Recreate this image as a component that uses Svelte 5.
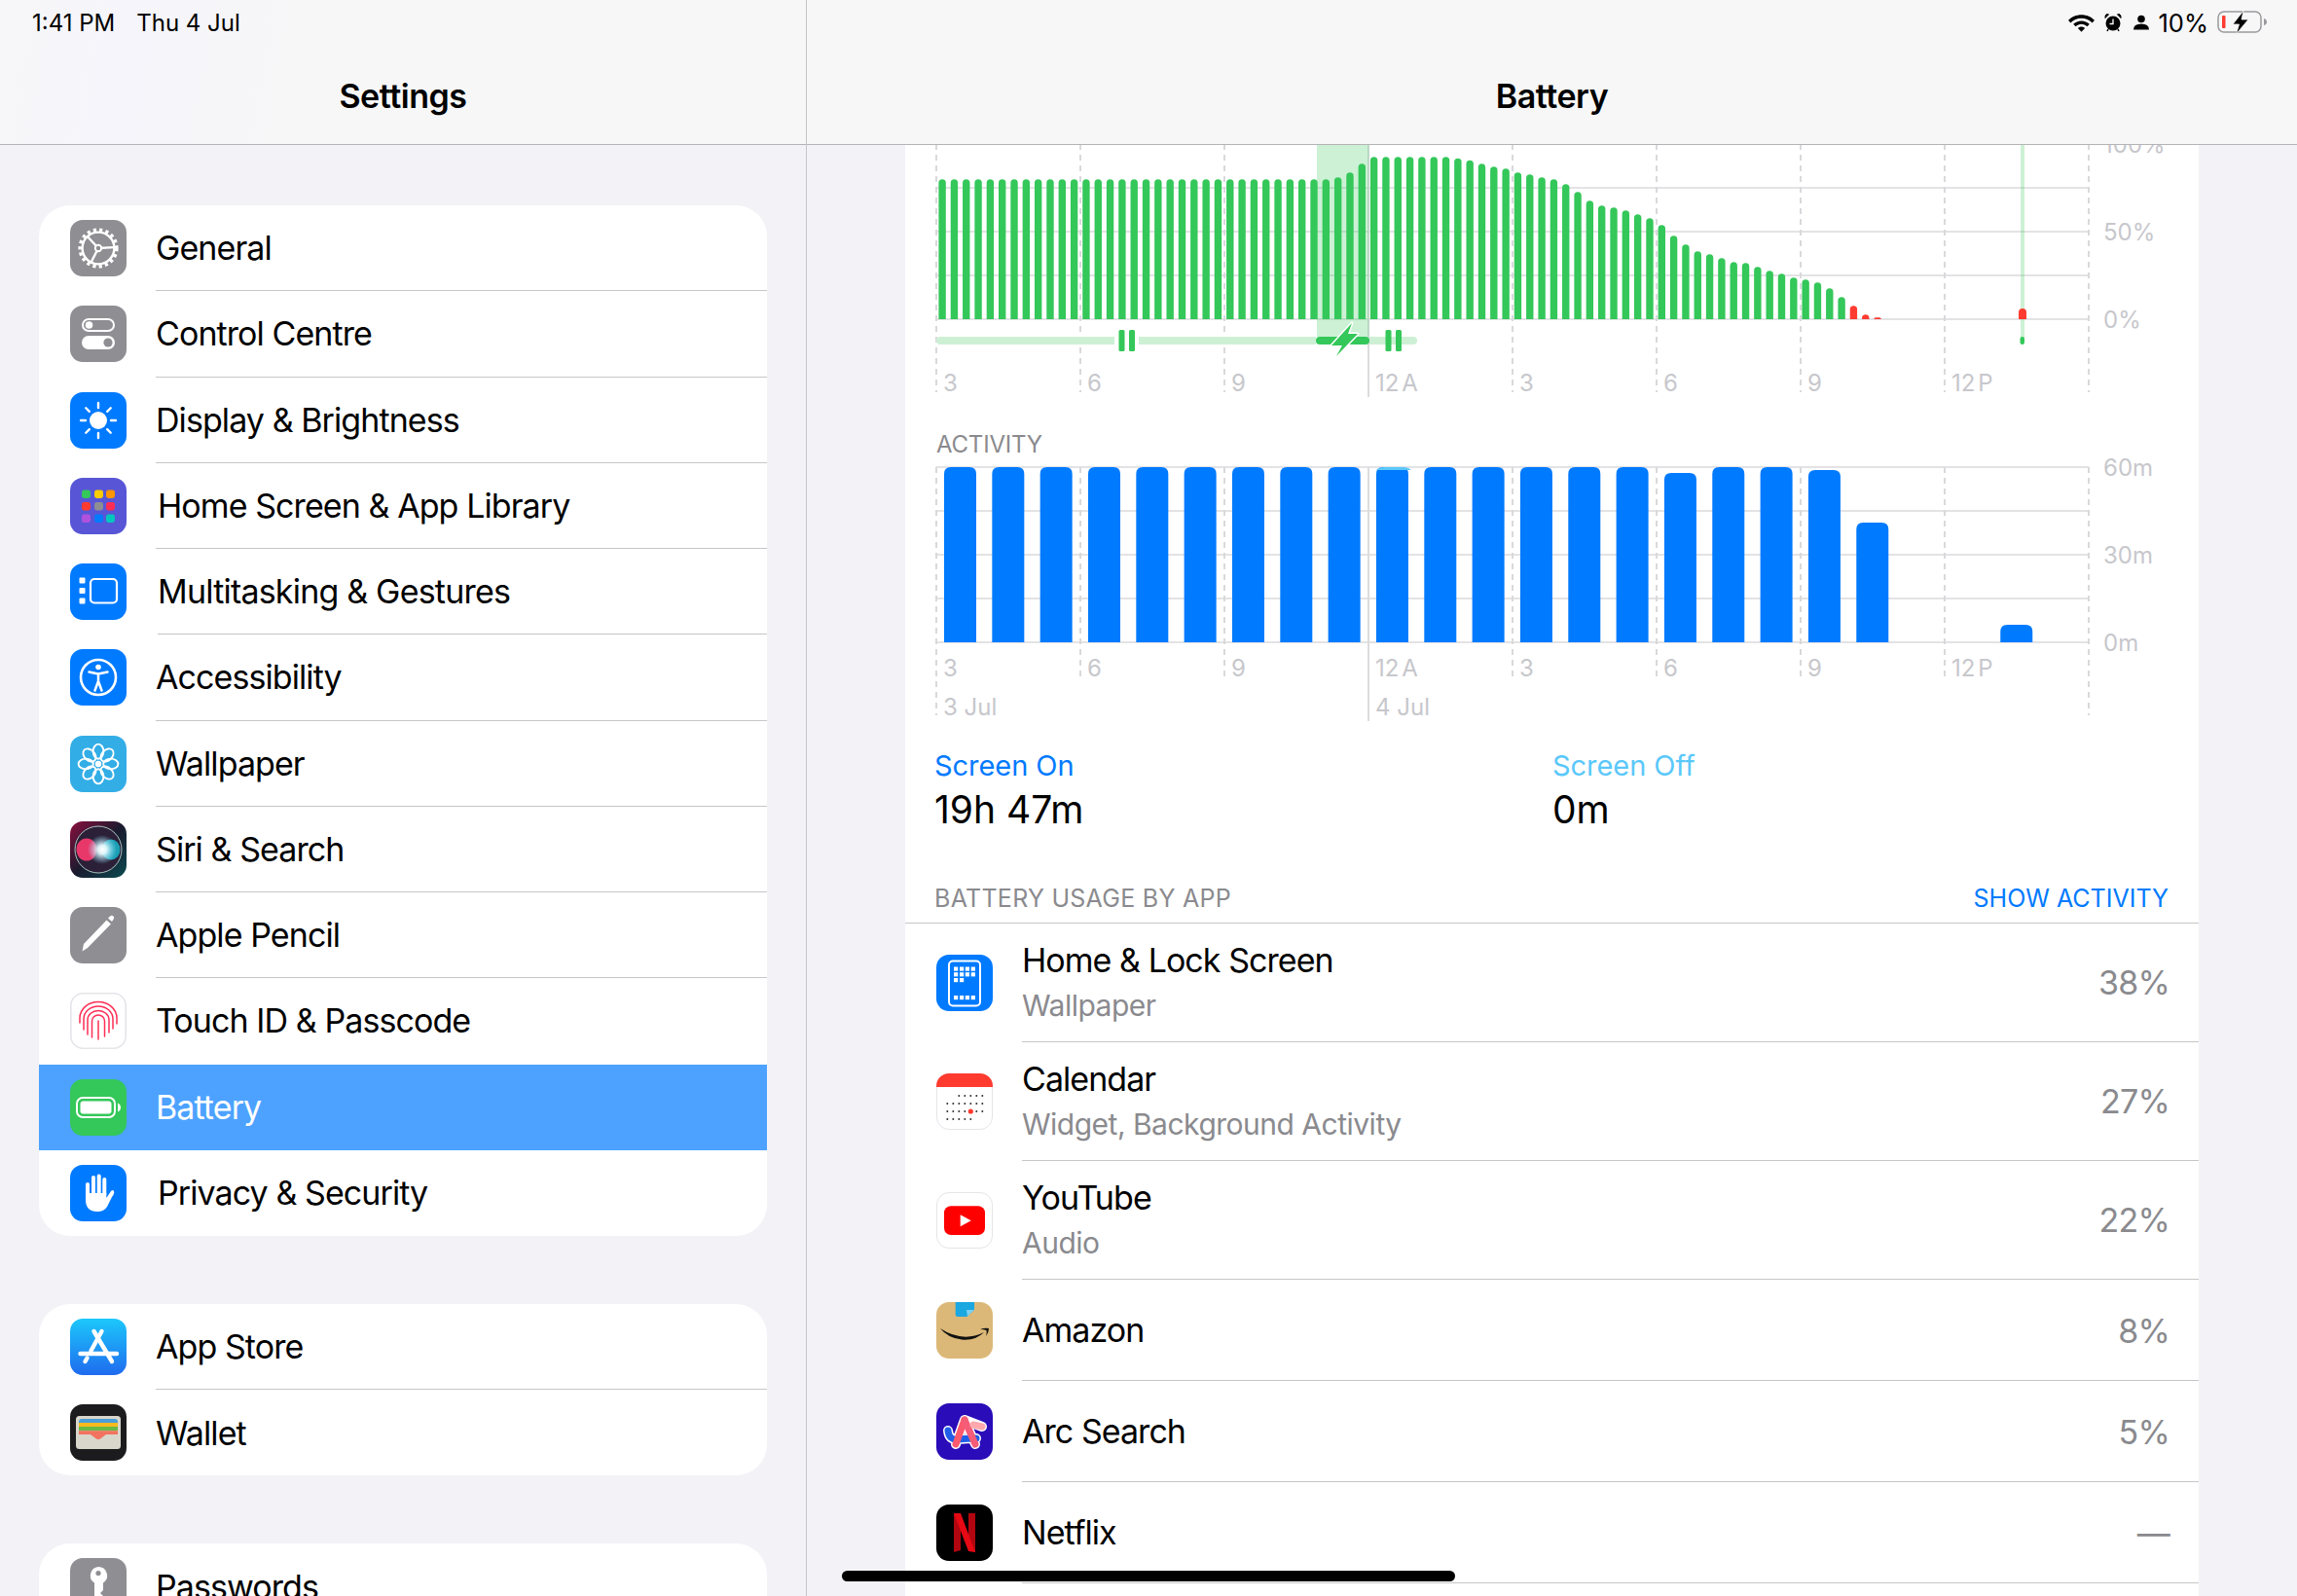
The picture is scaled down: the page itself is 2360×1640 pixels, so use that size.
<script>
  const group1 = [
    ['gear','General'],['toggles','Control Centre'],['sun','Display & Brightness'],['grid','Home Screen & App Library'],
    ['multi','Multitasking & Gestures'],['access','Accessibility'],['flower','Wallpaper'],['siri','Siri & Search'],
    ['pencil','Apple Pencil'],['touch','Touch ID & Passcode'],['battery','Battery'],['hand','Privacy & Security']
  ];
  const group2 = [['appstore','App Store'],['wallet','Wallet']];
  const group3 = [['key','Passwords']];
  const apps = [
    {i:'homelock',t:'Home & Lock Screen',s:'Wallpaper',p:'38%'},
    {i:'calendar',t:'Calendar',s:'Widget, Background Activity',p:'27%'},
    {i:'youtube',t:'YouTube',s:'Audio',p:'22%'},
    {i:'amazon',t:'Amazon',p:'8%'},
    {i:'arc',t:'Arc Search',p:'5%'},
    {i:'netflix',t:'Netflix',p:'—'},
    {i:'',t:'',p:''}
  ];
  const tops = [...Array(33).fill(163),157,142,115,...Array(7).fill(94),98,104,115,124,130,142,148,157,163,178,202,229,
    244,250,259,271,283,304,337,364,385,394,406,418,421,433,445,454,466,472,481,499,526,553,580,589];
  const barPath = (x,w,top,bottom,r) => {
    const rr = Math.min(r, bottom-top);
    return `M${x} ${bottom}V${top+rr}Q${x} ${top} ${x+rr} ${top}H${x+w-rr}Q${x+w} ${top} ${x+w} ${top+rr}V${bottom}Z`;
  };
  const greens = tops.map((py,i)=>({d:barPath(964.4+12.32*i,7.4,130+py/3,328,3.7),red:i>=76}));
  const blueTops = [...Array(15).fill(480),486,480,480,483,537,null,null,642];
  const blues = blueTops.map((t,i)=> t===null?null:barPath(970+49.33*i,33,t,660,7)).filter(Boolean);
  const gridX = [962,1110,1258,1406,1554,1702,1850,1998,2146];
  const hours = [['3',969],['6',1117],['9',1265],['12 A',1413],['3',1561],['6',1709],['9',1857],['12 P',2005]];
  const petals = [0,45,90,135,180,225,270,315];
  const cal = [[23,[2,3,4,5,6]],[31,[0,1,2,3,4,5,6]],[39,[0,1,2,3,5,6]],[47,[0,1,2,3,4]]];
  const gearSpokes = [[-133],[-3],[117]];
</script>

{#snippet icon(n)}
  <svg class="icon" viewBox="0 0 58 58" width="58" height="58" aria-hidden="true">
    <defs>
      <linearGradient id={'as-'+n} x1="0" y1="0" x2="0" y2="1"><stop offset="0" stop-color="#1cc8fb"/><stop offset="1" stop-color="#1f6bef"/></linearGradient>
      <linearGradient id={'si-'+n} x1="0" y1="0" x2="1" y2="1"><stop offset="0" stop-color="#8a0f3e"/><stop offset=".5" stop-color="#1a1a2e"/><stop offset="1" stop-color="#0b4a50"/></linearGradient>
      <radialGradient id={'sr-'+n}><stop offset="0" stop-color="#fff"/><stop offset=".3" stop-color="#e8fbff" stop-opacity=".95"/><stop offset="1" stop-color="#8fe6ff" stop-opacity="0"/></radialGradient>
    </defs>
    {#if n==='gear'}
      <rect width="58" height="58" rx="13" fill="#8e8e93"/>
      <circle cx="29" cy="29" r="18.6" fill="none" stroke="#fff" stroke-width="4" stroke-dasharray="3.2 3.1"/>
      <circle cx="29" cy="29" r="16.4" fill="none" stroke="#fff" stroke-width="2.4"/>
      {#each gearSpokes as [a]}<line x1="29" y1="29" x2="45" y2="29" stroke="#fff" stroke-width="2.4" transform="rotate({a} 29 29)"/>{/each}
      <circle cx="29" cy="29" r="3.2" fill="#8e8e93" stroke="#fff" stroke-width="2"/>
    {:else if n==='toggles'}
      <rect width="58" height="58" rx="13" fill="#8e8e93"/>
      <rect x="13" y="14" width="32" height="12" rx="6" fill="none" stroke="#fff" stroke-width="2"/>
      <circle cx="19.5" cy="20" r="3.8" fill="#fff"/>
      <rect x="12" y="31" width="34" height="14" rx="7" fill="#fff"/>
      <circle cx="39" cy="38" r="4.6" fill="#8e8e93"/>
    {:else if n==='sun'}
      <rect width="58" height="58" rx="13" fill="#007aff"/>
      <circle cx="29" cy="29" r="9" fill="#fff"/>
      {#each petals as a}<line x1="29" y1="11" x2="29" y2="16" stroke="#fff" stroke-width="2.4" stroke-linecap="round" transform="rotate({a} 29 29)"/>{/each}
    {:else if n==='grid'}
      <rect width="58" height="58" rx="13" fill="#5856d6"/>
      <rect x="12" y="12.5" width="9" height="8.5" rx="2.4" fill="#34c759"/><rect x="25" y="12.5" width="9" height="8.5" rx="2.4" fill="#ffcc00"/><rect x="37" y="12.5" width="9" height="8.5" rx="2.4" fill="#ff9500"/>
      <rect x="12" y="25" width="9" height="8.5" rx="2.4" fill="#ff3b30"/><rect x="25" y="25" width="9" height="8.5" rx="2.4" fill="#8e8e93"/><rect x="37" y="25" width="9" height="8.5" rx="2.4" fill="#ff2d55"/>
      <rect x="12" y="37.5" width="9" height="8.5" rx="2.4" fill="#af52de"/><rect x="25" y="37.5" width="9" height="8.5" rx="2.4" fill="#007aff"/><rect x="37" y="37.5" width="9" height="8.5" rx="2.4" fill="#00c7be"/>
    {:else if n==='multi'}
      <rect width="58" height="58" rx="13" fill="#007aff"/>
      <rect x="9.5" y="14.5" width="6" height="6" rx="1" fill="#fff"/><rect x="9.5" y="25" width="6" height="6" rx="1" fill="#fff"/><rect x="9.5" y="35.5" width="6" height="6" rx="1" fill="#fff"/>
      <rect x="21" y="16" width="27" height="24.5" rx="4" fill="none" stroke="#fff" stroke-width="2.2"/>
    {:else if n==='access'}
      <rect width="58" height="58" rx="13" fill="#007aff"/>
      <circle cx="29" cy="29" r="18" fill="none" stroke="#fff" stroke-width="2.6"/>
      <circle cx="29" cy="18.5" r="2.8" fill="#fff"/>
      <path d="M19.5 23.5 29 25.5 38.5 23.5M29 25.5V33M29 33 25.5 42.5M29 33 32.5 42.5" fill="none" stroke="#fff" stroke-width="2.5" stroke-linecap="round" stroke-linejoin="round"/>
    {:else if n==='flower'}
      <rect width="58" height="58" rx="13" fill="#32ade6"/>
      {#each petals as a}<ellipse cx="29" cy="16.2" rx="5.4" ry="7.6" fill="none" stroke="#fff" stroke-width="1.9" transform="rotate({a} 29 29)"/>{/each}
      <circle cx="29" cy="29" r="3.2" fill="#fff"/>
    {:else if n==='siri'}
      <rect width="58" height="58" rx="13" fill={'url(#si-siri)'}/>
      <circle cx="29" cy="29" r="24" fill="#2b2038" stroke="#a9c2bd" stroke-width="1"/>
      <ellipse cx="17" cy="29" rx="10.5" ry="11.5" fill="#e8386a"/>
      <ellipse cx="42" cy="29" rx="9.5" ry="10.5" fill="#1c9fb5"/>
      <circle cx="33" cy="29" r="15" fill={'url(#sr-siri)'}/>
    {:else if n==='pencil'}
      <rect width="58" height="58" rx="13" fill="#8e8e93"/>
      <path d="M12.5 45.5 14 38 37.5 13.5 42 17.5 18 42Z" fill="#fff"/>
      <path d="M39 11.5 41 9.5Q43 8 44.5 9.5T44 13.5L43 15Z" fill="#fff"/>
    {:else if n==='touch'}
      <rect x=".8" y=".8" width="56.4" height="56.4" rx="12.5" fill="#fff" stroke="#e5e5ea" stroke-width="1.6"/>
      <g fill="none" stroke="#ff2d55" stroke-width="1.5" stroke-linecap="round">
        <path d="M10 31V26A19 16.5 0 0 1 48 26V32"/><path d="M14 38V27A15 13 0 0 1 44 27V37"/><path d="M18 43V28A11 9.5 0 0 1 40 28V41"/><path d="M22.5 46V29A6.5 6 0 0 1 35.5 29V45"/><path d="M29 48V29"/>
      </g>
    {:else if n==='battery'}
      <rect width="58" height="58" rx="13" fill="#34c759"/>
      <rect x="7" y="19" width="39" height="20" rx="6" fill="none" stroke="#fff" stroke-width="2"/>
      <rect x="10.5" y="22.5" width="32" height="13" rx="3" fill="#fff"/>
      <path d="M49 24.5Q52 26 52 29T49 33.5Z" fill="#fff"/>
    {:else if n==='hand'}
      <rect width="58" height="58" rx="13" fill="#007aff"/>
      <g stroke="#fff" stroke-width="4" stroke-linecap="round"><line x1="18" y1="31" x2="18" y2="20"/><line x1="24" y1="30" x2="24" y2="13"/><line x1="29.7" y1="30" x2="29.7" y2="11.5"/><line x1="35.3" y1="30" x2="35.3" y2="15"/></g>
      <path d="M16 29H37.3V34L42 27Q44 25 45 27T43 33L38 43Q35 48 28 48 16 48 16 36Z" fill="#fff"/>
    {:else if n==='appstore'}
      <rect width="58" height="58" rx="13" fill={'url(#as-appstore)'}/>
      <g stroke="#fff" stroke-width="4.4" stroke-linecap="round" fill="none"><path d="M24.5 13 43 44"/><path d="M32.5 13 21.500 33"/><path d="M17.500 40.500 15.500 44"/><path d="M10.5 36H48"/></g>
    {:else if n==='wallet'}
      <rect width="58" height="58" rx="13" fill="#1c1c1e"/>
      <rect x="6" y="12" width="46" height="34" rx="3.5" fill="#d9d6cc"/>
      <path d="M9 18Q9 15 12 15H46Q49 15 49 18V19H9Z" fill="#4a9fd8"/>
      <rect x="9" y="19" width="40" height="4" fill="#f9b91d"/><rect x="9" y="23" width="40" height="4.2" fill="#6bb944"/>
      <path d="M9 27.2H49V31H37L31 35.5Q29 36.5 27 35.5L21 31H9Z" fill="#f2735f"/>
    {:else if n==='key'}
      <rect width="58" height="58" rx="13" fill="#8e8e93"/>
      <path d="M29 9a9 9 0 0 1 5 16.5V33l-3 3 3 3-3 3 3 3-5 5-4-4V25.500A9 9 0 0 1 29 9Z" fill="#fff"/>
      <circle cx="29" cy="15.500" r="2.600" fill="#8e8e93"/>
    {:else if n==='homelock'}
      <rect width="58" height="58" rx="13" fill="#007aff"/>
      <rect x="13" y="6.500" width="32" height="46" rx="4" fill="none" stroke="#fff" stroke-width="2"/>
      {#each [12.5,18.2] as y}{#each [18,24,29.8,35.7] as x}<rect {x} {y} width="4.200" height="4.200" fill="#fff"/>{/each}{/each}
      {#each [18,24] as x}<rect {x} y="24" width="4.200" height="4.200" fill="#fff"/>{/each}
      {#each [18,24,29.8,35.7] as x}<rect {x} y="42" width="4.200" height="4.200" fill="#fff"/>{/each}
    {:else if n==='calendar'}
      <rect x=".5" y=".5" width="57" height="57" rx="12.500" fill="#fff" stroke="#e5e5ea"/>
      <path d="M0 14V13A13 13 0 0 1 13 0H45A13 13 0 0 1 58 13V14Z" fill="#ff3b30"/>
      {#each cal as [y,cols]}{#each cols as c}<circle cx={11.3+6*c} cy={y} r="1" fill="#333"/>{/each}{/each}
      <circle cx="35.300" cy="39" r="2.600" fill="#ff3b30"/>
    {:else if n==='youtube'}
      <rect x=".5" y=".5" width="57" height="57" rx="12.500" fill="#fff" stroke="#e5e5ea"/>
      <rect x="8" y="14.300" width="42" height="29.700" rx="7" fill="#f00"/>
      <path d="M24.700 23.300 35.700 29.200 24.700 35.200Z" fill="#fff"/>
    {:else if n==='amazon'}
      <rect width="58" height="58" rx="13" fill="#dcb878"/>
      <path d="M19.700 0H39V8L32 14.500Q31 15 29 15H22Q19.700 15 19.700 13Z" fill="#1ba7e0"/>
      <path d="M31 8 39 8 32 14.500Z" fill="#7fd0ef"/>
      <path d="M4 27Q27 42 49 31 40 40 26 38.500 12 37 4 27Z" fill="#111"/>
      <path d="M45 28Q50 26 54 27 54 31 51 35 52 31 51.500 29 49 28 45 28Z" fill="#111"/>
    {:else if n==='arc'}
      <rect width="58" height="58" rx="13" fill="#2a0cb8"/>
      <g fill="none" stroke-linecap="round" stroke-linejoin="round">
        <path d="M12 28Q13 38 22 37 32 36 41 36M20 42 29 17 40 42M29 17 47 24" stroke="#fff" stroke-width="10"/>
        <path d="M12 28Q13 38 22 37 32 36 41 36" stroke="#1f5fe8" stroke-width="7"/>
        <path d="M20 42 29 17" stroke="#fb5a6e" stroke-width="7"/>
        <path d="M29 17 40 42" stroke="#f45c78" stroke-width="7"/>
        <path d="M38 22 47 24" stroke="#ffa8ad" stroke-width="7"/>
      </g>
    {:else if n==='netflix'}
      <rect width="58" height="58" rx="13" fill="#000"/>
      <path d="M18 9H25V47L18 49Z" fill="#b1060f"/><path d="M33 9H40V49L33 47Z" fill="#b1060f"/>
      <path d="M18 9H25L40 49 33 48Z" fill="#e50914"/>
    {/if}
  </svg>
{/snippet}

{#snippet navRow(item)}
  <div class="nav-row" class:sel={item[1]==='Battery'}>
    {@render icon(item[0])}
    <div class="nav-label">{item[1]}</div>
  </div>
{/snippet}

<div class="screen">
  <aside class="sidebar">
    <header class="bar side-bar">
      <div class="status"><span>1:41 PM</span><span class="date">Thu 4 Jul</span></div>
      <h1>Settings</h1>
    </header>
    <div class="nav">
      <section class="card first">{#each group1 as r}{@render navRow(r)}{/each}</section>
      <section class="card">{#each group2 as r}{@render navRow(r)}{/each}</section>
      <section class="card">{#each group3 as r}{@render navRow(r)}{/each}</section>
    </div>
  </aside>

  <main class="detail">
    <header class="bar">
      <div class="status right">
        <svg class="s-wifi" width="27" height="19" viewBox="1.500 2.500 25 17.500"><path d="M14 3.500C19 3.500 23.500 5.500 26.500 8.800L24.300 11.200C21.700 8.400 18 6.800 14 6.800S6.300 8.400 3.700 11.200L1.500 8.800C4.500 5.500 9 3.500 14 3.500Z" fill="#000"/><path d="M14 9.300C17 9.300 19.700 10.500 21.700 12.500L19.500 14.800C18 13.400 16.100 12.500 14 12.500S10 13.400 8.500 14.800L6.300 12.500C8.300 10.500 11 9.300 14 9.300Z" fill="#000"/><path d="M14 15C15.300 15 16.500 15.500 17.300 16.300L14 19.800 10.700 16.300C11.500 15.500 12.700 15 14 15Z" fill="#000"/></svg>
        <svg class="s-alarm" width="18" height="20" viewBox="0 0 18 20"><circle cx="9" cy="11" r="7.500" fill="#000"/><path d="M9 6.500V11.500H5.500" stroke="#fff" stroke-width="1.300" fill="none"/><path d="M1 5.500 4.500 1.800 2.500 1.500Q.5 2.500 1 5.500ZM17 5.500 13.500 1.800 15.500 1.500Q17.500 2.500 17 5.500Z" fill="#000" stroke="#000"/><path d="M4 17 3 19M14 17 15 19" stroke="#000" stroke-width="1.500"/></svg>
        <svg class="s-person" width="16" height="16" viewBox="0 0 16 16"><circle cx="8" cy="4.500" r="3.800" fill="#000"/><path d="M0 15.500Q0 9.500 8 9.500T16 15.500Z" fill="#000"/></svg>
        <span class="pct">10%</span>
        <svg class="s-batt" width="52" height="24" viewBox="0 0 52 24"><rect x="1" y="1" width="44" height="21" rx="6" fill="none" stroke="#9a9a9e" stroke-width="1.500"/><rect x="5" y="5" width="3.500" height="13" rx="1" fill="#ff3b30"/><path d="M48 8Q51 9 51 11.500T48 15Z" fill="#9a9a9e"/><path d="M27 0 16 14H22.500L19.500 24 32 9H25Z" fill="#000" stroke="#f7f7f7" stroke-width=".8"/></svg>
      </div>
      <h1>Battery</h1>
    </header>

    <div class="scroll">
      <div class="panel">
        <svg class="chart" viewBox="930 149 1329 610" width="1329" height="610" role="img" aria-label="Battery level and activity charts">
          <g stroke="#e3e3e6" stroke-width="2">
            {#each [193,238,283,328] as y}<line x1="962" x2="2146" y1={y} y2={y}/>{/each}
            {#each [480,525,570,615,660] as y}<line x1="962" x2="2146" y1={y} y2={y}/>{/each}
          </g>
          <g stroke="#d9d9dc" stroke-width="2" stroke-dasharray="6 5">
            {#each gridX as x,i}
              {#if i!==3}
                <line x1={x} x2={x} y1="148" y2="403"/>
                <line x1={x} x2={x} y1="480" y2={i===0||i===8?735:697}/>
              {/if}
            {/each}
          </g>
          <line x1="1406" x2="1406" y1="148" y2="408" stroke="#dcdcde" stroke-width="2"/>
          <line x1="1406" x2="1406" y1="480" y2="741" stroke="#dcdcde" stroke-width="2"/>

          <rect x="1353" y="148" width="53.500" height="198" fill="#34c759" opacity=".25"/>
          <rect x="2076" y="148" width="4" height="200" fill="#34c759" opacity=".25"/>
          {#each greens as b}<path d={b.d} fill={b.red?'#ff3b30':'#34c759'}/>{/each}
          <path d="M2074 328V321Q2074 317 2078 317T2082 321V328Z" fill="#ff3b30"/>
          <rect x="2075.500" y="346" width="4.500" height="8" rx="2.200" fill="#34c759"/>

          <path d="M966 346H1145V354H966A4 4 0 0 1 966 346ZM1170 346H1352V354H1170ZM1407 346H1452A4 4 0 0 1 1452 354H1407Z" fill="#cdf0d5"/>
          <rect x="1149.500" y="339" width="6" height="22" rx="1.500" fill="#34c759"/><rect x="1160" y="339" width="6" height="22" rx="1.500" fill="#34c759"/>
          <rect x="1423.500" y="339" width="6" height="22" rx="1.500" fill="#34c759"/><rect x="1434" y="339" width="6" height="22" rx="1.500" fill="#34c759"/>
          <rect x="1352" y="346" width="55" height="8" rx="4" fill="#34c759"/>
          <path d="M1389 332 1368 355H1379L1373 366 1395 343H1385Z" fill="#34c759" stroke="#fff" stroke-width="3" stroke-linejoin="round" paint-order="stroke"/>

          <g class="axis">
            {#each hours as [t,x]}<text {x} y="402">{t}</text><text {x} y="695">{t}</text>{/each}
            <text x="2161" y="157">100%</text><text x="2161" y="247">50%</text><text x="2161" y="337">0%</text>
            <text x="2161" y="489">60m</text><text x="2161" y="579">30m</text><text x="2161" y="669">0m</text>
            <text class="day" x="969" y="735">3 Jul</text><text class="day" x="1413" y="735">4 Jul</text>
          </g>
          <text class="cap" x="962" y="465">ACTIVITY</text>
          {#each blues as d}<path {d} fill="#007aff"/>{/each}
          <path d="M1414 483Q1417 480 1423 480H1441Q1447 480 1450 483Z" fill="#5ac8fa"/>
        </svg>

        <div class="stats">
          <div><div class="s-label on">Screen On</div><div class="s-val">19h 47m</div></div>
          <div><div class="s-label off">Screen Off</div><div class="s-val">0m</div></div>
        </div>

        <div class="sec-head"><span>BATTERY USAGE BY APP</span><span class="link">SHOW ACTIVITY</span></div>

        <div class="list">
          {#each apps as a}
            <div class="app" class:tall={a.s}>
              <div class="app-icon">{#if a.i}{@render icon(a.i)}{/if}</div>
              <div class="app-body">
                <div class="app-text">
                  <div class="app-title">{a.t}</div>
                  {#if a.s}<div class="app-sub">{a.s}</div>{/if}
                </div>
                <div class="app-pct">{a.p}</div>
              </div>
            </div>
          {/each}
        </div>
      </div>
    </div>
  </main>
  <div class="home"></div>
</div>

<style>
  :global(body){margin:0;background:#f2f2f7;}
  .screen{position:relative;width:2360px;height:1640px;display:flex;overflow:hidden;background:#f2f2f7;color:#000;font-family:Inter,"Noto Sans",sans-serif;}
  .sidebar{width:829px;flex:none;box-sizing:border-box;border-right:1px solid #c6c6c8;display:flex;flex-direction:column;}
  .detail{flex:1;min-width:0;display:flex;flex-direction:column;}
  .bar{height:149px;flex:none;box-sizing:border-box;border-bottom:1px solid #b4b4b6;background:#f7f7f7;position:relative;z-index:1;}
  .side-bar{background:linear-gradient(100deg,#f7f7f9 0%,#f5f5fb 16%,#f7f7f7 40%);}
  h1{margin:0;font-size:34px;font-weight:600;line-height:44px;text-align:center;letter-spacing:-.45px;padding-top:31px;}
  .status{height:46px;display:flex;align-items:center;padding:0 32px 0 33px;font-size:24px;letter-spacing:0;}
  .date{margin-left:22px;}
  .status.right{justify-content:flex-end;padding:0 30px 0 0;}
  .s-wifi{margin-right:10px;}
  .s-alarm{margin-right:12px;}
  .s-person{margin-right:10px;}
  .pct{font-size:25.500px;margin-right:9px;}
  .nav{padding:62px 40px 0 40px;flex:1;overflow:hidden;}
  .card{background:#fff;border-radius:32px;overflow:hidden;margin-bottom:70px;}
  .nav-row{height:88px;display:flex;align-items:stretch;}
  .first .nav-row{height:88.25px;}
  .nav-row .icon{align-self:center;margin:0 30px 0 32px;flex:none;}
  .nav-label{flex:1;display:flex;align-items:center;font-size:34px;letter-spacing:-.92px;border-bottom:1px solid #c6c6c8;}
  .first .nav-row:nth-child(4) .nav-label,.first .nav-row:nth-child(12) .nav-label{text-indent:2px;}
  .first .nav-row:nth-child(5) .nav-label{margin-left:2px;letter-spacing:-.8px;}
  .nav-row:last-child .nav-label{border-bottom:0;}
  .sel{background:#4da2ff;color:#fff;}
  .sel .nav-label{border-bottom:0;}
  .nav-row:nth-child(10) .nav-label{border-bottom-color:transparent;}
  .scroll{flex:1;overflow:hidden;padding:0 101px 0 101px;}
  .panel{background:#fff;height:100%;}
  .chart{display:block;}
  .axis text{font-size:24px;fill:#c7c7cc;word-spacing:-4px;}
  .axis .day{word-spacing:0;}
  .cap{font-size:24px;fill:#8a8a8e;letter-spacing:-.2px;}
  .stats{display:grid;grid-template-columns:635px 1fr;padding:10px 30px 0;}
  .s-label{font-size:29px;line-height:36px;letter-spacing:-.05px;}
  .on{color:#007aff;}.off{color:#5ac8fa;}
  .s-val{font-size:39px;line-height:46px;margin-top:4px;letter-spacing:0;}
  .sec-head{display:flex;justify-content:space-between;padding:52.500px 31px 10px 30px;font-size:25px;line-height:30px;color:#8a8a8e;letter-spacing:.27px;}
  .link{color:#007aff;letter-spacing:0;}
  .list{border-top:1px solid #c6c6c8;}
  .app{height:104px;display:flex;}
  .app.tall{height:122px;}
  .app-icon{width:120px;flex:none;padding-left:32px;box-sizing:border-box;display:flex;align-items:center;}
  .icon{display:block;}
  .app-body{flex:1;display:flex;align-items:center;justify-content:space-between;border-bottom:1px solid #c6c6c8;padding-right:30px;}
  .app:not(.tall) .app-body{padding-top:2px;}
  .app-title{font-size:34px;line-height:40px;letter-spacing:-.95px;}
  .app-sub{font-size:30px;line-height:36px;margin-top:8px;color:#8a8a8e;letter-spacing:-.5px;}
  .app-pct{font-size:34px;color:#8a8a8e;letter-spacing:-.8px;}
  .home{position:absolute;left:865px;top:1614px;width:630px;height:11px;border-radius:6px;background:#000;z-index:2;}
</style>
